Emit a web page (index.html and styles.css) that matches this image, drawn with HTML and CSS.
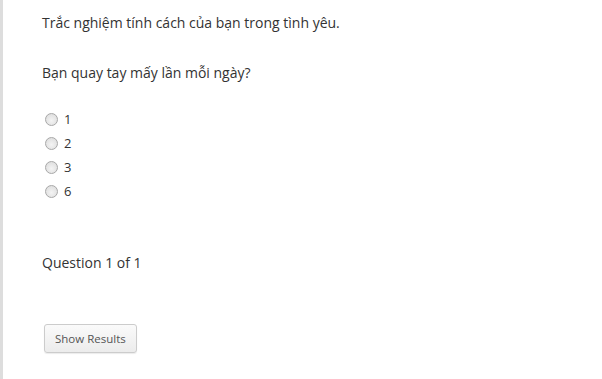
FILE: index.html
```html
<!DOCTYPE html>
<html lang="vi">
<head>
    <meta charset="UTF-8">
    <title>Trắc nghiệm</title>
    <link rel="stylesheet" href="styles.css">
</head>
<body>
    <div class="quiz">
        <p class="quiz-title">Trắc nghiệm tính cách của bạn trong tình yêu.</p>

        <p class="question">Bạn quay tay mấy lần mỗi ngày?</p>

        <ul class="answers">
            <li><label><input type="radio" name="q1" value="1"> 1</label></li>
            <li><label><input type="radio" name="q1" value="2"> 2</label></li>
            <li><label><input type="radio" name="q1" value="3"> 3</label></li>
            <li><label><input type="radio" name="q1" value="6"> 6</label></li>
        </ul>

        <p class="counter">Question 1 of 1</p>

        <button type="button" class="results-btn">Show Results</button>
    </div>
</body>
</html>
```

FILE: styles.css
```css
body {
    margin: 0;
    font-family: "Open Sans", sans-serif;
    color: #333333;
    background: #ffffff;
}

.quiz {
    min-height: 379px;
    box-sizing: border-box;
    border-left: 3px solid #dddddd;
    padding: 13px 0 0 39px;
}

.quiz-title,
.question,
.counter {
    margin: 0;
    font-size: 14px;
    line-height: 20px;
}

.question {
    margin-top: 30px;
}

.answers {
    list-style: none;
    margin: 24px 0 0;
    padding: 0;
}

.answers li {
    height: 24px;
    display: flex;
    align-items: center;
    font-size: 13px;
}

.answers label {
    display: flex;
    align-items: center;
    gap: 6px;
}

.answers input {
    appearance: none;
    -webkit-appearance: none;
    margin: 0 0 0 3px;
    width: 13px;
    height: 13px;
    border: 1px solid #a8a8a8;
    border-radius: 50%;
    background: radial-gradient(circle at 50% 60%, #f4f4f4, #d9d9d9);
}

.counter {
    margin-top: 50px;
}

.results-btn {
    margin: 51px 0 0 2px;
    height: 29px;
    padding: 0 10px;
    font-family: "Open Sans", sans-serif;
    font-size: 11.5px;
    color: #555555;
    background: linear-gradient(#fafafa, #ececec);
    border: 1px solid #cccccc;
    border-radius: 3px;
    box-shadow: 0 1px 1px rgba(0, 0, 0, 0.08);
}
```
